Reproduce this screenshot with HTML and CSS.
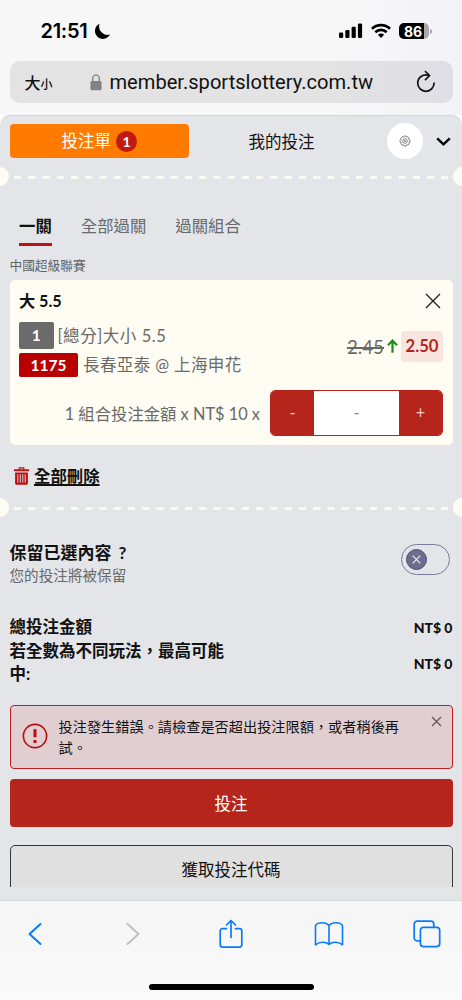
FILE: index.html
```
<!DOCTYPE html>
<html lang="zh-Hant">
<head>
<meta charset="utf-8">
<meta name="viewport" content="width=device-width">
<title>投注單</title>
<link rel="stylesheet" href="styles.css">
</head>
<body>
<div class="phone">
  <header class="browser-top">
    <div class="status">
      <div class="clock"><span>21:51</span>
        <svg width="17" height="17" viewBox="0 0 17 17"><path d="M5.600 .8A7.900 7.900 0 1 0 16 11.400 8.300 8.300 0 0 1 5.600 .8z"/></svg>
      </div>
      <div class="signals">
        <svg width="24" height="16" viewBox="0 0 24 16"><rect x="0" y="9.500" width="4.200" height="5.500" rx="1.200"/><rect x="6.300" y="7" width="4.200" height="8" rx="1.200"/><rect x="12.600" y="3.800" width="4.200" height="11.200" rx="1.200"/><rect x="18.900" y="0.500" width="4.200" height="14.500" rx="1.200"/></svg>
        <svg width="20" height="16" viewBox="0 0 20 16"><g fill="none" stroke="#000" stroke-width="2.700"><path d="M1 5.800a12.800 12.800 0 0 1 18 0"/><path d="M4.300 9.200a8.100 8.100 0 0 1 11.400 0"/></g><path d="M10 15l-3.100-3.200a4.400 4.400 0 0 1 6.200 0z"/></svg>
        <div class="battery"><span>86</span></div>
      </div>
    </div>
    <div class="address">
      <span class="size">大<small>小</small></span>
      <div class="host">
        <svg width="12" height="17" viewBox="0 0 12 17"><rect x="0.400" y="7" width="11.200" height="9.300" rx="1.600" fill="#828286"/><path d="M2.600 8V4.800a3.400 3.600 0 0 1 6.800 0V8" fill="none" stroke="#828286" stroke-width="1.300"/></svg>
        <span>member.sportslottery.com.tw</span>
      </div>
      <svg class="reload" width="20" height="24" viewBox="0 0 20 24" fill="none" stroke="#111" stroke-width="1.700" stroke-linecap="round" stroke-linejoin="round"><path d="M12.800 5.400C7 3.400 1.700 7.800 1.700 13.100a8.200 8.200 0 0 0 16.400 0"/><path d="M9.400 1.500l4.200 4-4.100 4.100"/></svg>
    </div>
  </header>

  <main class="slip">
    <nav class="top-tabs">
      <button class="slip-tab">投注單<span class="count">1</span></button>
      <span class="mine">我的投注</span>
      <span class="gear"><svg width="12" height="12" viewBox="0 0 12 12" fill="none" stroke="#777" stroke-width=".9"><path d="M5 1h2l.5 1.200 1.300-.5 1.400 1.400-.5 1.300L11 5v2l-1.300.5.5 1.300-1.400 1.400-1.300-.5L7 11H5l-.5-1.300-1.300.5L1.800 8.800l.5-1.300L1 7V5l1.300-.6-.5-1.300 1.400-1.400 1.300.5z"/><circle cx="6" cy="6" r="2.300"/><circle cx="6" cy="6" r=".6"/></svg></span>
      <svg class="chev" width="15" height="10" viewBox="0 0 15 10" fill="none" stroke="#050505" stroke-width="2.500"><path d="M1.200 1.300l6.300 6 6.300-6"/></svg>
    </nav>
    <div class="tear"><i></i><svg width="434" height="3"><path d="M0 1.500H434" stroke="#fffdf3" stroke-width="2.600" stroke-dasharray="7.200 7.040"/></svg><i></i></div>
    <nav class="modes"><span class="on">一關</span><span>全部過關</span><span>過關組合</span></nav>
    <div class="league">中國超級聯賽</div>

    <section class="card">
      <div class="pick"><b>大 5.5</b>
        <svg width="16" height="16" viewBox="0 0 16 16" stroke="#222" stroke-width="1.400"><path d="M1 1l14 14M15 1L1 15"/></svg>
      </div>
      <div class="event">
        <div class="event-lines">
          <div class="line"><span class="tag">1</span><span class="market">[總分]大小 5.5</span></div>
          <div class="line"><span class="tag code">1175</span><span class="teams">長春亞泰 @ 上海申花</span></div>
        </div>
        <div class="odds"><s>2.45</s>
          <svg width="11" height="14" viewBox="0 0 11 14" fill="none" stroke="#168f16" stroke-width="2.200"><path d="M5.500 13.700V1.800M1 6.300l4.500-4.700L10 6.300"/></svg>
          <b>2.50</b>
        </div>
      </div>
      <div class="stake"><span>1 組合投注金額 x NT$ 10 x</span>
        <div class="stepper"><button>-</button><span>-</span><button>+</button></div>
      </div>
    </section>

    <div class="clear">
      <svg width="15" height="18" viewBox="0 0 15 18"><path d="M5.300 2.500V.8h4.400v1.700" fill="none" stroke="#b91010" stroke-width="1.300"/><path d="M0 2.300h15v2H0zM1.100 5.400h12.800v10.800a1.500 1.500 0 0 1-1.500 1.500H2.600a1.500 1.500 0 0 1-1.500-1.500z" fill="#b91010"/><path d="M3.800 7.200v8.500M6.300 7.200v8.500M8.800 7.200v8.500M11.200 7.200v8.500" stroke="#e4e5e8" stroke-width=".9"/></svg>
      <span>全部刪除</span>
    </div>
    <div class="tear second"><i></i><svg width="434" height="3"><path d="M0 1.500H434" stroke="#fffdf3" stroke-width="2.600" stroke-dasharray="7.200 7.040"/></svg><i></i></div>

    <div class="keep">
      <div><div class="keep-title">保留已選內容<span class="mark">?</span></div><div class="keep-sub">您的投注將被保留</div></div>
      <div class="toggle"><span class="knob"><svg width="9" height="9" viewBox="0 0 9 9" stroke="#ededf5" stroke-width="1.200"><path d="M.7.7l7.600 7.600M8.300.7L.7 8.300"/></svg></span></div>
    </div>

    <div class="totals">
      <div class="row"><span>總投注金額</span><b>NT$ 0</b></div>
      <div class="row tall"><span>若全數為不同玩法，最高可能<br>中:</span><b>NT$ 0</b></div>
    </div>

    <div class="error">
      <svg width="26" height="26" viewBox="0 0 26 26"><circle cx="13" cy="13" r="11.600" fill="none" stroke="#b90d12" stroke-width="1.600"/><path d="M11.500 6.300h3v8h-3zM11.500 17h3v3h-3z" fill="#b90d12"/></svg>
      <p>投注發生錯誤。請檢查是否超出投注限額，或者稍後再<br>試。</p>
      <svg class="dismiss" width="11" height="11" viewBox="0 0 11 11" stroke="#66585c" stroke-width="1.400"><path d="M1 1l9 9M10 1L1 10"/></svg>
    </div>
    <button class="submit">投注</button>
    <div class="code-clip"><button class="get-code">獲取投注代碼</button></div>
  </main>

  <footer class="browser-bottom">
    <div class="tools">
      <span><svg width="14" height="24" viewBox="0 0 14 24" fill="none" stroke="#087bfb" stroke-width="2" stroke-linecap="round" stroke-linejoin="round"><path d="M12.500 2L1.500 12l11 10"/></svg></span>
      <span><svg width="14" height="24" viewBox="0 0 14 24" fill="none" stroke="#bfbfc0" stroke-width="2" stroke-linecap="round" stroke-linejoin="round"><path d="M1.500 2l11 10-11 10"/></svg></span>
      <span><svg width="26" height="30" viewBox="0 0 26 30" fill="none" stroke="#087bfb" stroke-width="1.700" stroke-linecap="round" stroke-linejoin="round"><path d="M8.500 9.700H4.500a2.300 2.300 0 0 0-2.300 2.300v13.800a2.300 2.300 0 0 0 2.300 2.300h17a2.300 2.300 0 0 0 2.300-2.300V12a2.300 2.300 0 0 0-2.300-2.300h-4"/><path d="M13 18.500V1.500M8.500 6L13 1.500 17.500 6"/></svg></span>
      <span><svg width="30" height="26" viewBox="0 0 30 26" fill="none" stroke="#087bfb" stroke-width="1.600" stroke-linejoin="round"><path d="M15 4.500v19C12 20.600 5.500 20.500 1.500 23.800V4.500C4 .9 12 .9 15 4.500zM15 4.500c3-3.600 11-3.600 13.500 0v19.300C24.500 20.500 18 20.600 15 23.500"/></svg></span>
      <span><svg width="28" height="28" viewBox="0 0 28 28" fill="none" stroke="#087bfb" stroke-width="1.700"><path d="M7.400 20.900H4.200a3 3 0 0 1-3-3V4.200a3 3 0 0 1 3-3h13.600a3 3 0 0 1 3 3v3"/><rect x="7.400" y="7.300" width="19.300" height="19.300" rx="3"/></svg></span>
    </div>
    <div class="home"></div>
  </footer>
</div>
</body>
</html>
```
FILE: styles.css
```
* { box-sizing: border-box; }
body { margin: 0; background: #fff; }
button { border: 0; padding: 0; font: inherit; color: inherit; background: none; }
svg { display: block; flex: none; }
.phone { width: 462px; height: 1000px; overflow: hidden; display: flex; flex-direction: column; font-family: Lato, "Noto Sans CJK TC", sans-serif; color: #111; white-space: nowrap; }

/* Browser chrome */
.browser-top { height: 115px; flex: none; padding: 0 9.500px; background: linear-gradient(90deg, #f7f7f7 70%, #f3f3f7); font-family: Inter, "Noto Sans CJK TC", sans-serif; }
.status { height: 61px; display: flex; justify-content: space-between; padding: 1px 25px 0 31px; align-items: center; }
.clock { display: flex; align-items: center; gap: 3px; font-size: 20px; font-weight: 600; letter-spacing: -.3px; color: #000; }
.clock span { width: 50px; }
.signals { display: flex; align-items: center; gap: 8px; }
.battery { position: relative; width: 30px; height: 16.500px; border-radius: 5px; background: linear-gradient(90deg, #000 25.500px, #a9a9ad 25.500px); color: #fff; font-size: 14px; font-weight: 700; line-height: 17px; padding-left: 5px; margin-left: 0; margin-right: -1.500px; }
.battery::after { content: ""; position: absolute; right: -3px; top: 6px; width: 2px; height: 5px; border-radius: 0 2px 2px 0; background: #a9a9ad; }
.address { height: 42px; border-radius: 10px; background: linear-gradient(90deg, #e3e3e3 70%, #dedee5); display: flex; align-items: center; padding: 0 17px 0 15px; }
.size { width: 65px; font-size: 16px; font-weight: 500; }
.size small { font-size: 12px; }
.host { flex: 1; display: flex; align-items: center; gap: 8px; font-size: 20.100px; font-family: Roboto, sans-serif; color: #111; }

/* Bet slip */
.slip { height: 786px; flex: none; background: #e4e5e8; border-top: 1px solid #d3d4d6; border-bottom: 1px solid #d9dadd; border-radius: 10px 10px 0 0; overflow: hidden; display: flex; flex-direction: column; }
.top-tabs { height: 50px; flex: none; padding: 0 11px 0 9.500px; display: flex; align-items: center; font-size: 16.500px; }
.slip-tab { width: 179.500px; height: 33.500px; border-radius: 4px; background: #ff7b00; color: #fff; display: flex; align-items: center; justify-content: center; gap: 5px; line-height: 31px; }
.count { width: 21px; height: 21px; border-radius: 50%; background: #bf1b13; font-size: 14px; font-weight: 700; line-height: 21px; text-align: center; }
.mine { flex: 1; text-align: center; padding-right: 13px; }
.gear { width: 36px; height: 36px; border-radius: 50%; background: #fff; display: grid; place-items: center; margin-right: 13px; }
.chev { margin-top: 2px; }
.tear { height: 19px; flex: none; display: flex; align-items: center; justify-content: space-between; margin: 1px -10px 0; }
.tear.second { margin-top: 0; }
.tear i { width: 19px; height: 19px; border-radius: 50%; background: #fffdf3; }
.tear svg { margin-top: 1px; }
.modes { height: 60px; flex: none; display: flex; gap: 29px; padding: 23px 19px 0; font-size: 16.400px; line-height: 34px; color: #68696b; }
.modes .on { color: #111; font-weight: 700; border-bottom: 3.500px solid #bc1117; height: 37px; }
.league { height: 33.500px; flex: none; padding: 7px 9.500px 0; font-size: 12.700px; line-height: 25px; color: #626365; }
.card { height: 165.500px; flex: none; margin: 0 9.500px; padding: 0 9.500px; background: #fffdf3; border-radius: 5px; font-size: 16.500px; color: #696966; }
.pick { height: 42px; display: flex; justify-content: space-between; align-items: center; color: #111; padding-right: 2px; font-size: 16.200px; }
.pick b { margin-top: -2px; }
.event { display: flex; justify-content: space-between; height: 56px; }
.event-lines { display: flex; flex-direction: column; gap: 4px; }
.line { display: flex; align-items: center; gap: 4px; height: 27px; }
.line + .line { height: 24px; gap: 5px; line-height: 22px; }
.tag { width: 34.500px; height: 27px; border-radius: 2px; background: #6b6b6b; color: #fff; font-size: 15.500px; line-height: 27px; font-weight: 700; text-align: center; }
.code { width: 59px; height: 24px; line-height: 24px; background: #b80000; }
.market { letter-spacing: .55px; }
.teams { letter-spacing: .4px; }
.odds { display: flex; align-items: center; height: 31px; margin-top: 9px; }
.odds s { font-size: 18.800px; margin-right: 3px; text-decoration-thickness: 1.500px; }
.odds b { width: 42px; height: 31px; margin-left: 3px; border-radius: 4px; background: #f8e5df; color: #b5281c; font-size: 16.700px; line-height: 31px; text-align: center; }
.stake { display: flex; align-items: center; justify-content: flex-end; gap: 10px; margin-top: 12.500px; font-size: 16.350px; }
.stepper { width: 173px; height: 45.500px; display: flex; border: 1px solid #b6251b; border-radius: 5px; overflow: hidden; text-align: center; line-height: 44px; background: #fff; }
.stepper button { width: 43px; background: #b6251b; color: #f4c9c4; }
.stepper span { flex: 1; color: #888; }
.clear { height: 53px; flex: none; padding: 10px 14px 0; display: flex; align-items: center; gap: 5px; font-size: 16.400px; font-weight: 700; }
.clear svg { margin-top: -2px; }
.clear span { text-decoration: underline; text-decoration-thickness: 1.500px; text-underline-offset: 2px; margin-top: -3px; }
.keep { height: 74px; flex: none; margin-top: 25px; padding: 0 12px 0 9.500px; display: flex; justify-content: space-between; }
.keep-title { font-size: 17px; font-weight: 700; line-height: 22px; }
.mark { margin-left: 7px; }
.keep-sub { font-size: 14.600px; line-height: 23px; color: #68696b; }
.toggle { width: 49.500px; height: 31px; margin-top: 2px; border: 1.200px solid #7c7b9b; border-radius: 16px; padding: 4px; }
.knob { width: 21px; height: 21px; border-radius: 50%; background: #6e6d8d; border: 1.500px solid #504d78; display: grid; place-items: center; }
.totals { height: 89px; flex: none; padding: 0 9.500px; font-size: 16.500px; line-height: 23.600px; font-weight: 700; }
.row { display: flex; justify-content: space-between; align-items: center; }
.row b { font-size: 14px; margin-top: 0; }
.tall b { margin-top: 2px; }
.error { height: 64px; flex: none; margin: 0 9.500px; border: 1.500px solid #bf1d23; border-radius: 4px; background: #e1ced1; display: flex; padding: 0 10px 0 11px; }
.error > svg { margin-top: 17px; }
.error p { margin: 10px 0 0 11px; flex: 1; font-size: 14.200px; line-height: 21px; }
.error .dismiss { margin-top: 10px; }
.submit { height: 48px; flex: none; margin: 9.500px 9.500px 18.500px; border-radius: 4px; background: #b6251b; color: #fff; font-size: 16.500px; }
.code-clip { height: 42px; flex: none; margin: 0 9.500px; overflow: hidden; }
.get-code { width: 100%; height: 48px; border: 1.500px solid #333738; border-radius: 5px; background: #e0e0e0; font-size: 16.500px; }

/* Browser toolbar */
.browser-bottom { height: 99px; flex: none; background: linear-gradient(#f5f5f6, #fafafa); }
.tools { height: 83px; padding: 0 20px 18px; display: flex; justify-content: space-between; align-items: center; }
.tools span { width: 30px; display: flex; justify-content: center; }
.home { width: 165px; height: 6px; border-radius: 3px; margin: 0 auto; background: #000; }
```
